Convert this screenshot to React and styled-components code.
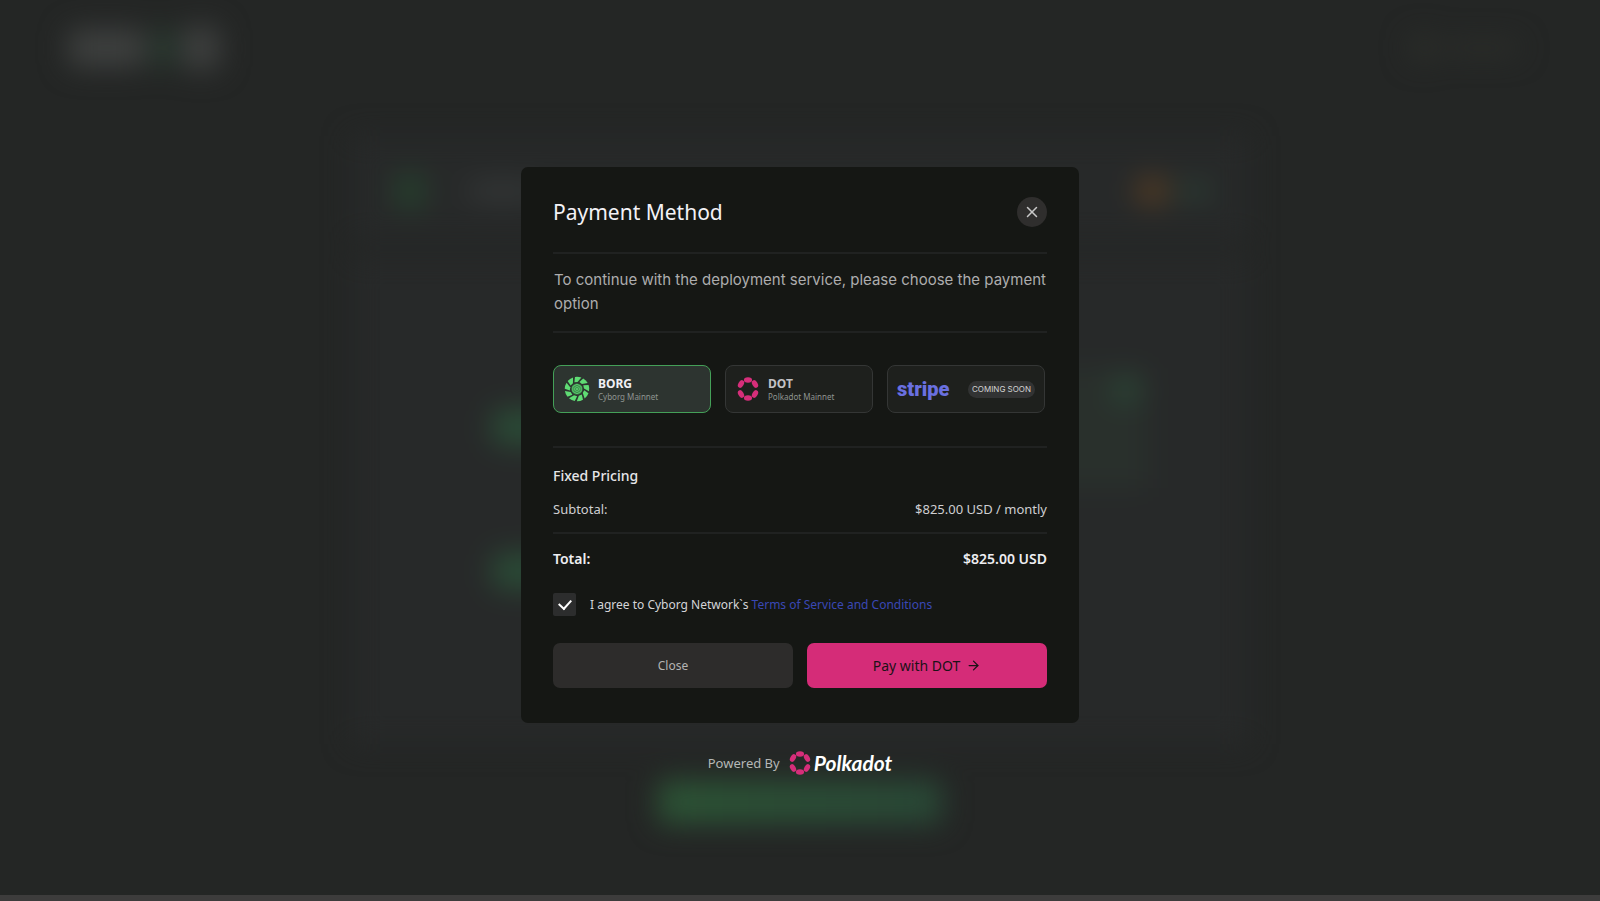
import React, { useState } from "react";
import styled, { createGlobalStyle } from "styled-components";
import { FiArrowRight, FiX } from "react-icons/fi";

const options = [
  { id: "borg", name: "BORG", network: "Cyborg Mainnet" },
  { id: "dot", name: "DOT", network: "Polkadot Mainnet" },
];

const blades = [0, 40, 80, 120, 160, 200, 240, 280, 320];
const petals = [
  [12, 3, 0],
  [19, 7, 60],
  [19, 17, -60],
  [12, 21, 0],
  [5, 17, 60],
  [5, 7, -60],
];

const CyborgLogo = () => (
  <svg width="26" height="26" viewBox="0 0 26 26" aria-hidden="true">
    {blades.map((deg) => (
      <path
        key={deg}
        transform={`rotate(${deg} 13 13)`}
        d="M11 0.9 Q14.2 0.3 17.4 1.6 L13.6 6 L10.4 6.2 Z"
        fill="#5fdc74"
      />
    ))}
    <circle cx="13" cy="13" r="5.6" fill="#3c8f4c" />
    <path d="M13 8.2 L17.2 10.6 V15.4 L13 17.8 L8.8 15.4 V10.6 Z" fill="none" stroke="#5fd074" strokeWidth="0.8" />
    <path d="M13 10.4 L15.3 11.7 V14.3 L13 15.6 L10.7 14.3 V11.7 Z" fill="none" stroke="#5fd074" strokeWidth="0.8" />
    <circle cx="13" cy="13" r="1" fill="#5fd074" />
  </svg>
);

const PolkadotLogo = () => (
  <svg width="24" height="24" viewBox="0 0 24 24" aria-hidden="true">
    {petals.map(([x, y, deg]) => (
      <ellipse key={`${x}-${y}`} cx={x} cy={y} rx="4.1" ry="2.7" transform={`rotate(${deg} ${x} ${y})`} fill="#d62e7a" />
    ))}
  </svg>
);

const App = () => {
  const [method, setMethod] = useState("borg");
  const [agree, setAgree] = useState(true);

  return (
    <Page>
      <GlobalStyle />
      <Backdrop aria-hidden="true">
        <BlurHeader>
          <BlurLogo>
            <Blob w="78px" h="38px" color="#3e403f" />
            <Blob w="20px" h="38px" color="#283c30" />
            <Blob w="38px" h="44px" color="#3e403f" />
          </BlurLogo>
          <BlurLogo>
            <Blob w="26px" h="26px" color="#2c2e2a" />
            <Blob w="76px" h="14px" color="#2c2e2a" />
          </BlurLogo>
        </BlurHeader>
        <BlurCard h="104px">
          <BlurLogo>
            <Blob w="32px" h="36px" color="#263e2d" />
            <BlurSpace />
            <Blob w="70px" h="18px" color="#353838" />
          </BlurLogo>
          <BlurLogo>
            <Blob w="32px" h="26px" color="#533b23" />
            <Blob w="36px" h="16px" color="#2b3e34" />
          </BlurLogo>
        </BlurCard>
        <BlurCard h="488px">
          <BlurSteps>
            <Blob w="60px" h="36px" color="#2a4b36" />
            <Blob w="60px" h="36px" color="#2a4b36" />
          </BlurSteps>
          <BlurPanel>
            <Blob w="24px" h="24px" color="#2b4937" />
          </BlurPanel>
        </BlurCard>
        <BlurButton />
      </Backdrop>

      <Content>
        <Modal role="dialog" aria-labelledby="payment-title">
          <Header>
            <Title id="payment-title">Payment Method</Title>
            <RoundButton type="button" aria-label="Dismiss">
              <FiX size={18} />
            </RoundButton>
          </Header>
          <Divider />
          <Description>
            To continue with the deployment service, please choose the payment option
          </Description>
          <Divider />

          <Options>
            {options.map(({ id, name, network }) => (
              <Option key={id} $active={method === id}>
                <HiddenRadio name="method" value={id} checked={method === id} onChange={() => setMethod(id)} />
                {id === "borg" ? <CyborgLogo /> : <PolkadotLogo />}
                <OptionText>
                  <OptionName $active={method === id}>{name}</OptionName>
                  <OptionNetwork>{network}</OptionNetwork>
                </OptionText>
              </Option>
            ))}
            <StripeOption>
              <HiddenRadio name="method" value="stripe" disabled />
              <StripeLogo>stripe</StripeLogo>
              <Badge>COMING SOON</Badge>
            </StripeOption>
          </Options>
          <Divider />

          <Pricing>
            <PricingTitle>Fixed Pricing</PricingTitle>
            <Row>
              <span>Subtotal:</span>
              <span>$825.00 USD / montly</span>
            </Row>
          </Pricing>
          <Divider />
          <TotalRow>
            <span>Total:</span>
            <span>$825.00 USD</span>
          </TotalRow>

          <Agreement>
            <Checkbox id="agree" checked={agree} onChange={(e) => setAgree(e.target.checked)} />
            <AgreementText>
              <label htmlFor="agree">I agree to Cyborg Network`s</label>{" "}
              <TermsLink href="#terms">Terms of Service and Conditions</TermsLink>
            </AgreementText>
          </Agreement>

          <Actions>
            <CloseButton type="button">Close</CloseButton>
            <PayButton type="button">
              Pay with DOT
              <FiArrowRight size={15} />
            </PayButton>
          </Actions>
        </Modal>

        <Powered>
          <span>Powered By</span>
          <Brand>
            <PolkadotLogo />
            <BrandName>Polkadot</BrandName>
          </Brand>
        </Powered>
      </Content>
      <BottomBar />
    </Page>
  );
};

const GlobalStyle = createGlobalStyle`
  * {
    box-sizing: border-box;
  }
  body {
    margin: 0;
    background: #242625;
    font-family: "Noto Sans", "Open Sans", sans-serif;
  }
  button {
    font-family: inherit;
    cursor: pointer;
  }
`;

const Page = styled.div`
  position: relative;
  display: flex;
  flex-direction: column;
  min-height: 100vh;
  overflow: hidden;
`;

/* dimmed app behind the dialog */
const Backdrop = styled.div`
  position: absolute;
  inset: 0;
  display: flex;
  flex-direction: column;
  align-items: center;
  filter: blur(14px);
`;

const BlurHeader = styled.div`
  display: flex;
  align-items: center;
  justify-content: space-between;
  width: 100%;
  height: 96px;
  margin-bottom: 40px;
  padding: 0 80px 0 68px;
`;

const BlurLogo = styled.div`
  display: flex;
  align-items: center;
  gap: 8px;
`;

const BlurSpace = styled.div`
  width: 26px;
`;

const Blob = styled.div`
  width: ${({ w }) => w};
  height: ${({ h }) => h};
  border-radius: 8px;
  background: ${({ color }) => color};
`;

const BlurCard = styled.div`
  display: flex;
  justify-content: space-between;
  width: 56%;
  height: ${({ h }) => h};
  margin-bottom: 16px;
  padding: 6px 36px 0 42px;
  background: #272929;
`;

const BlurSteps = styled.div`
  display: flex;
  flex-direction: column;
  gap: 108px;
  padding: 147px 0 0 98px;
`;

const BlurPanel = styled.div`
  display: flex;
  justify-content: flex-end;
  width: 300px;
  height: 120px;
  margin: 106px 64px 0 0;
  padding: 10px;
  background: #29302c;
`;

const BlurButton = styled.div`
  width: 284px;
  height: 44px;
  margin-top: 20px;
  border-radius: 6px;
  background: linear-gradient(90deg, #2c5335, #294836);
`;

const Content = styled.main`
  position: relative;
  display: flex;
  flex: 1;
  flex-direction: column;
  align-items: center;
  padding: 167px 16px 40px;
`;

const Modal = styled.section`
  width: 100%;
  max-width: 558px;
  padding: 30px 32px 35px;
  border-radius: 7px;
  background: #151714;
  color: #e6e6e9;
`;

const Header = styled.header`
  display: flex;
  align-items: center;
  justify-content: space-between;
  margin-bottom: 25px;
`;

const Title = styled.h1`
  margin: 0;
  font-size: 21px;
  font-weight: 400;
  line-height: 30px;
  color: #f3f2f7;
`;

const RoundButton = styled.button`
  display: flex;
  align-items: center;
  justify-content: center;
  width: 30px;
  height: 30px;
  padding: 0;
  border: none;
  border-radius: 50%;
  background: #2f2e2d;
  color: #c8c8c8;
`;

const Divider = styled.hr`
  height: 2px;
  margin: 0;
  border: none;
  background: #202221;
`;

const Description = styled.p`
  margin: 0;
  padding: 14px 0 15px 1px;
  font-family: Inter, sans-serif;
  font-size: 15px;
  line-height: 24px;
  color: #adadae;
`;

const Options = styled.div`
  display: grid;
  grid-template-columns: minmax(0, 158fr) minmax(0, 148fr) minmax(0, 158fr);
  gap: 14px;
  padding: 32px 2px 33px 0;
`;

const Option = styled.label`
  display: flex;
  align-items: center;
  gap: 8px;
  height: 48px;
  padding: 0 10px;
  border: 1px solid ${({ $active }) => ($active ? "#44a058" : "#343635")};
  border-radius: 8px;
  background: ${({ $active }) => ($active ? "#2d3430" : "#1e201d")};
  cursor: pointer;
`;

const StripeOption = styled(Option)`
  justify-content: space-between;
  padding: 0 9px;
  cursor: default;
`;

const HiddenRadio = styled.input.attrs({ type: "radio" })`
  position: absolute;
  width: 1px;
  height: 1px;
  margin: 0;
  opacity: 0;
`;

const OptionText = styled.span`
  display: flex;
  flex-direction: column;
`;

const OptionName = styled.span`
  font-size: 12px;
  font-weight: 700;
  line-height: 14px;
  color: ${({ $active }) => ($active ? "#f0f0f4" : "#c2c2c6")};
`;

const OptionNetwork = styled.span`
  font-size: 8px;
  line-height: 11px;
  color: #8f9491;
`;

const StripeLogo = styled.span`
  font-family: Roboto, sans-serif;
  font-size: 20px;
  font-weight: 900;
  line-height: 24px;
  color: #6a70e0;
`;

const Badge = styled.span`
  padding: 0 4px;
  border-radius: 9px;
  background: #323333;
  font-family: Inter, sans-serif;
  font-size: 8px;
  line-height: 17px;
  white-space: nowrap;
  color: #d4d4d4;
`;

const Pricing = styled.div`
  padding: 17px 0 13px;
`;

const PricingTitle = styled.h2`
  margin: 0 0 12px;
  font-size: 14px;
  font-weight: 500;
  line-height: 22px;
`;

const Row = styled.div`
  display: flex;
  justify-content: space-between;
  font-size: 13px;
  line-height: 20px;
  color: #cfcfd2;
`;

const TotalRow = styled(Row)`
  padding: 14px 0 23px;
  font-size: 14px;
  font-weight: 600;
  line-height: 22px;
  color: #eeeef2;
`;

const Agreement = styled.div`
  display: flex;
  align-items: center;
  gap: 14px;
`;

const Checkbox = styled.input.attrs({ type: "checkbox" })`
  display: grid;
  place-items: center;
  appearance: none;
  width: 23px;
  height: 23px;
  margin: 0;
  border-radius: 2px;
  background: #2c2d2d;

  &:checked::after {
    content: "";
    width: 6px;
    height: 10px;
    margin-bottom: 3px;
    border: solid #fff;
    border-width: 0 2px 2px 0;
    transform: rotate(42deg);
  }
`;

const AgreementText = styled.span`
  font-size: 12px;
  line-height: 20px;
  color: #d4d4d8;
`;

const TermsLink = styled.a`
  color: #3a48b4;
  text-decoration: none;
`;

const Actions = styled.div`
  display: grid;
  grid-template-columns: 1fr 1fr;
  gap: 14px;
  margin-top: 27px;
`;

const CloseButton = styled.button`
  display: flex;
  align-items: center;
  justify-content: center;
  gap: 6px;
  height: 45px;
  border: none;
  border-radius: 7px;
  background: #2d2c2b;
  font-size: 12px;
  color: #b4b4b3;
`;

const PayButton = styled(CloseButton)`
  background: #d52c78;
  font-size: 14px;
  color: #1b1217;
`;

const Powered = styled.div`
  display: flex;
  align-items: center;
  gap: 8px;
  margin-top: 28px;
  font-size: 13px;
  line-height: 24px;
  color: #b5b8b6;
`;

const Brand = styled.span`
  display: flex;
  align-items: center;
  gap: 2px;
`;

const BrandName = styled.span`
  font-family: Lato, sans-serif;
  font-size: 21px;
  font-style: italic;
  font-weight: 700;
  color: #fff;
`;

const BottomBar = styled.div`
  position: relative;
  height: 6px;
  background: #3d3c3c;
`;

export default App;
